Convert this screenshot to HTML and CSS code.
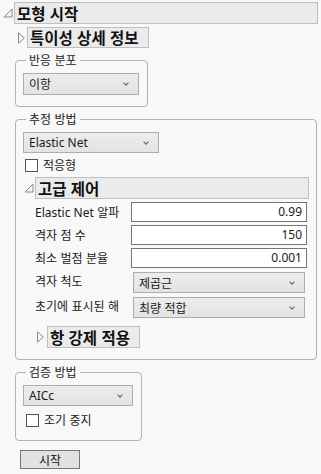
FILE: index.html
```html
<!DOCTYPE html>
<html lang="ko">
<head>
<meta charset="utf-8">
<link rel="stylesheet" href="styles.css">
</head>
<body>
<div class="root">
  <div class="ol-head top">
    <svg class="tri" width="10" height="10" viewBox="0 0 10 10"><path d="M9 1 L9 9 L1 9 Z" fill="none" stroke="#8a8a8a" stroke-width="1"/></svg>
    <div class="ol-title wide">모형 시작</div>
  </div>
  <div class="ol-body">
    <div class="ol-head sub">
      <svg class="tri" width="7" height="12" viewBox="0 0 7 12"><path d="M0.5 0.8 L6.3 6 L0.5 11.2 Z" fill="none" stroke="#8a8a8a" stroke-width="1"/></svg>
      <div class="ol-title fit">특이성 상세 정보</div>
    </div>

    <fieldset class="grp g1">
      <legend>반응 분포</legend>
      <div class="sel s1"><span>이항</span><svg class="chev" width="6" height="4" viewBox="0 0 6 4"><path d="M0.6 0.6 L3 3.2 L5.4 0.6" fill="none" stroke="#666" stroke-width="1.1"/></svg></div>
    </fieldset>

    <fieldset class="grp g2">
      <legend>추정 방법</legend>
      <div class="sel s2"><span class="lat">Elastic Net</span><svg class="chev" width="6" height="4" viewBox="0 0 6 4"><path d="M0.6 0.6 L3 3.2 L5.4 0.6" fill="none" stroke="#666" stroke-width="1.1"/></svg></div>
      <label class="chk c1"><span class="box"></span><span>적응형</span></label>

      <div class="ol-head adv">
        <svg class="tri" width="10" height="10" viewBox="0 0 10 10"><path d="M9 1 L9 9 L1 9 Z" fill="none" stroke="#8a8a8a" stroke-width="1"/></svg>
        <div class="ol-title wide">고급 제어</div>
      </div>
      <div class="adv-body">
        <div class="frow">
          <span class="flabel"><span class="lat">Elastic Net</span> 알파</span>
          <div class="inp lat">0.99</div>
        </div>
        <div class="frow">
          <span class="flabel">격자 점 수</span>
          <div class="inp lat">150</div>
        </div>
        <div class="frow">
          <span class="flabel">최소 벌점 분율</span>
          <div class="inp lat">0.001</div>
        </div>
        <div class="frow srow">
          <span class="flabel">격자 척도</span>
          <div class="sel s3"><span>제곱근</span><svg class="chev" width="6" height="4" viewBox="0 0 6 4"><path d="M0.6 0.6 L3 3.2 L5.4 0.6" fill="none" stroke="#666" stroke-width="1.1"/></svg></div>
        </div>
        <div class="frow srow">
          <span class="flabel">초기에 표시된 해</span>
          <div class="sel s3"><span>최량 적합</span><svg class="chev" width="6" height="4" viewBox="0 0 6 4"><path d="M0.6 0.6 L3 3.2 L5.4 0.6" fill="none" stroke="#666" stroke-width="1.1"/></svg></div>
        </div>
        <div class="ol-head force">
          <svg class="tri" width="7" height="12" viewBox="0 0 7 12"><path d="M0.5 0.8 L6.3 6 L0.5 11.2 Z" fill="none" stroke="#8a8a8a" stroke-width="1"/></svg>
          <div class="ol-title fit">항 강제 적용</div>
        </div>
      </div>
    </fieldset>

    <fieldset class="grp g3">
      <legend>검증 방법</legend>
      <div class="sel s4"><span class="lat">AICc</span><svg class="chev" width="6" height="4" viewBox="0 0 6 4"><path d="M0.6 0.6 L3 3.2 L5.4 0.6" fill="none" stroke="#666" stroke-width="1.1"/></svg></div>
      <label class="chk c2"><span class="box"></span><span>조기 중지</span></label>
    </fieldset>

    <button class="go">시작</button>
  </div>
</div>
</body>
</html>
```

FILE: styles.css
```css
html, body {
  margin: 0;
  padding: 0;
  background: #f8f8f8;
}
body {
  font-family: "Noto Sans CJK KR", "Noto Sans", sans-serif;
  font-size: 12px;
  line-height: 16px;
  color: #1a1a1a;
}
.lat {
  font-family: "Noto Sans", "Noto Sans CJK KR", sans-serif;
}
.root {
  padding: 2px 3px 0 3px;
}
.ol-head {
  display: flex;
  align-items: center;
}
.ol-head.top {
  gap: 1px;
}
.ol-head .tri {
  flex: none;
  display: block;
}
.ol-title {
  box-sizing: border-box;
  height: 22px;
  line-height: 20px;
  border: 1px solid #bfbfbf;
  background: #ebebeb;
  font-weight: bold;
  font-size: 15.5px;
  color: #111;
  padding-left: 2px;
  white-space: nowrap;
}
.ol-title.wide {
  flex: 1;
}
.ol-title.fit {
  padding-right: 9px;
  height: 21px;
  line-height: 19px;
}
.ol-body {
  padding-left: 12px;
}
.ol-head.sub {
  margin-top: 3px;
  padding-left: 3px;
  gap: 2px;
}
.grp {
  margin: 5px 0 0 0;
  border: 1px solid #b2b2b2;
  border-radius: 4px;
  padding: 6px 7px 11px 7px;
  box-sizing: border-box;
  min-width: 0;
}
.grp legend {
  padding: 0 3px;
  margin-left: 3px;
  line-height: 14px;
  height: 14px;
  color: #222;
}
.g1 { width: 133px; }
.g2 { width: 302px; }
.g3 { width: 127px; }

.sel {
  box-sizing: border-box;
  display: flex;
  align-items: center;
  justify-content: space-between;
  height: 22px;
  border: 1px solid #adadad;
  background: linear-gradient(#ececec, #e3e3e3);
  padding: 0 9px 0 5px;
  color: #1a1a1a;
}
.sel .chev { display: block; }
.s1 { width: 116px; }
.s2 { width: 136px; height: 21px; }
.s3 { width: 172px; height: 21px; }
.s4 { width: 110px; height: 21px; }

.chk {
  display: flex;
  align-items: center;
  gap: 5px;
  height: 18px;
}
.chk .box {
  box-sizing: border-box;
  width: 13px;
  height: 13px;
  border: 1px solid #555;
  background: #fff;
}
.c1 { margin-top: 3px; padding-left: 2px; }
.c2 { margin-top: 5px; padding-left: 3px; }

.ol-head.adv {
  margin-top: 3px;
  padding-left: 1px;
  gap: 1px;
}
.adv-body {
  padding-left: 12px;
  display: flex;
  flex-direction: column;
  gap: 3px;
  margin-top: 3px;
}
.frow {
  display: flex;
  align-items: center;
  height: 20px;
}
.flabel {
  width: 96px;
  flex: none;
  white-space: nowrap;
}
.inp {
  box-sizing: border-box;
  width: 176px;
  height: 20px;
  border: 1px solid #767676;
  background: #fff;
  text-align: right;
  padding-right: 4px;
  line-height: 18px;
  font-size: 12px;
}
.srow {
  align-items: flex-start;
  margin-top: 1px;
  height: 21px;
}
.srow .flabel {
  line-height: 18px;
}
.srow .sel {
  margin-left: 2px;
}
.ol-head.force {
  margin-top: 5px;
  padding-left: 2px;
  gap: 3px;
}
.ol-head.force .ol-title {
  height: 22px;
  line-height: 20px;
}

.go {
  display: block;
  margin: 9px 0 0 5px;
  width: 60px;
  height: 19px;
  padding: 0;
  border: 1px solid #777;
  background: #e1e1e1;
  font-family: "Noto Sans CJK KR", sans-serif;
  font-size: 12px;
  line-height: 17px;
  color: #111;
}
```
